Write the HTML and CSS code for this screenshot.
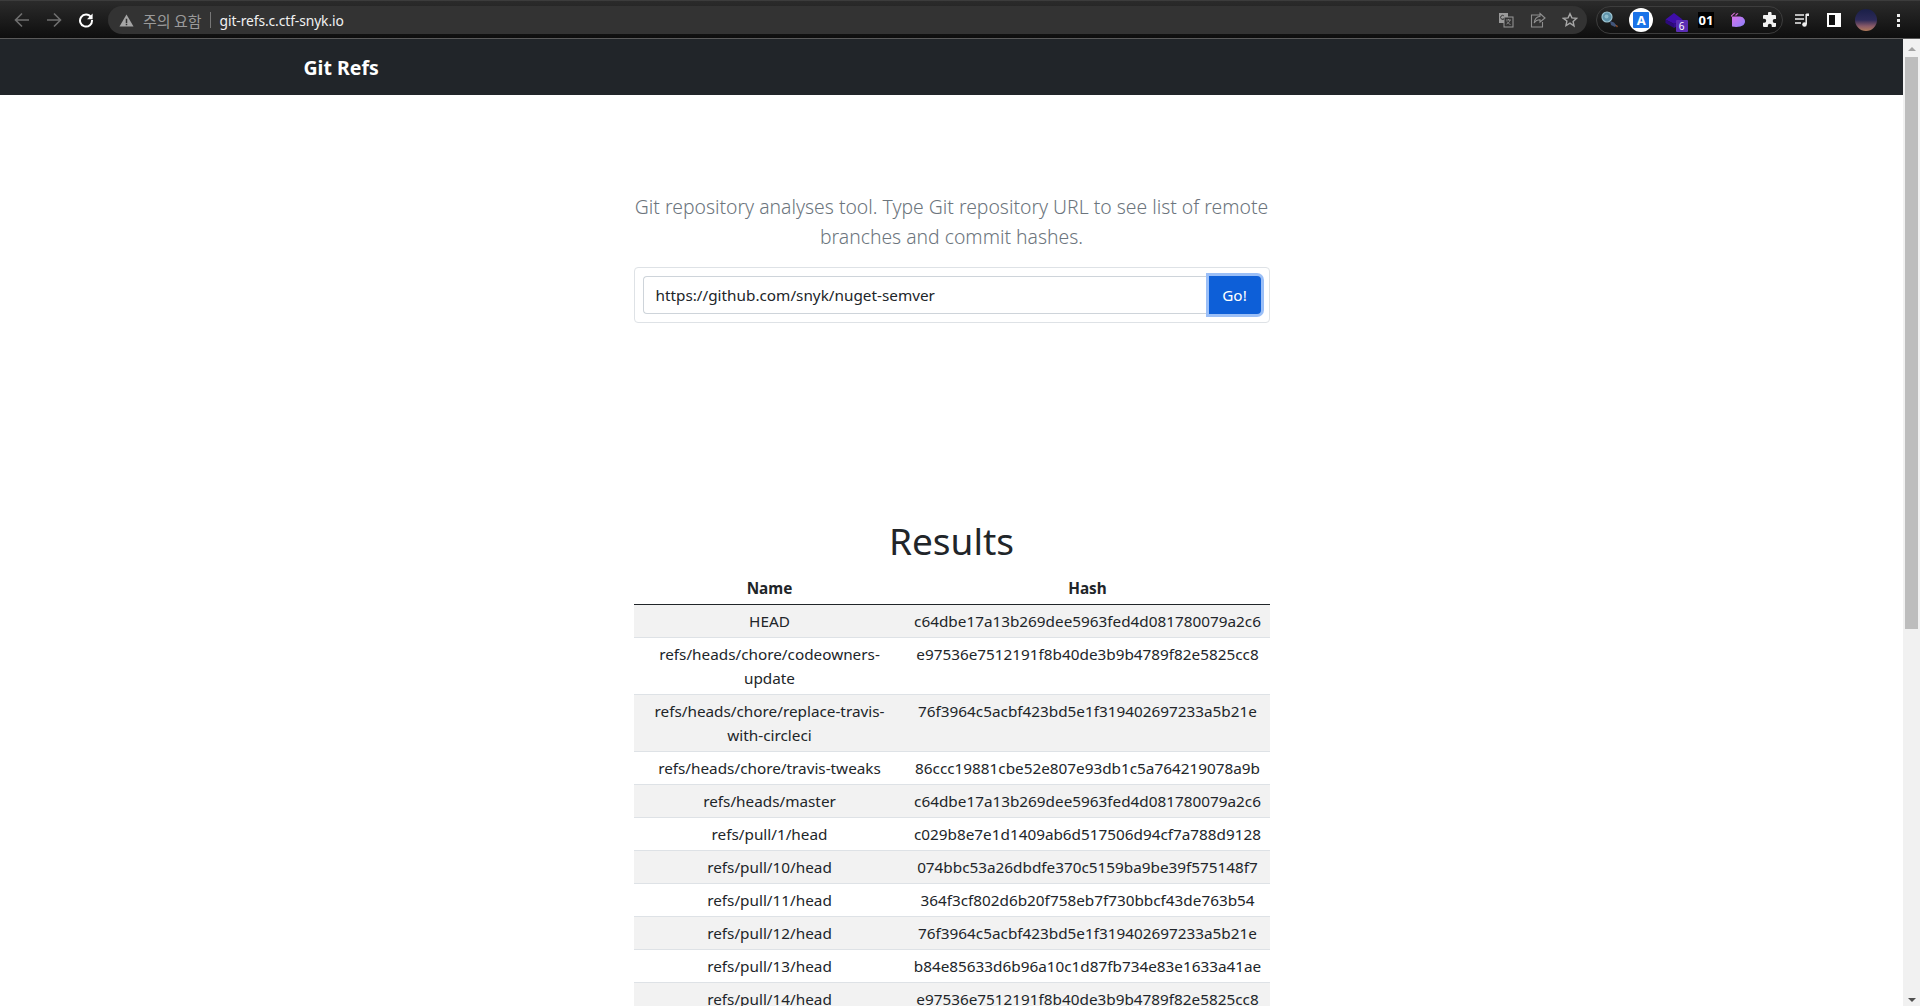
FILE: index.html
```html
<!DOCTYPE html>
<html lang="en">
<head>
<meta charset="utf-8">
<title>Git Refs</title>
<link rel="stylesheet" href="styles.css">
</head>
<body>
<header class="chrome">
  <nav class="nav-btns">
    <svg class="ic" viewBox="0 0 16 16"><path d="M15 8H1.500M8 1.500 1.500 8 8 14.500" fill="none" stroke="#6f6f6f" stroke-width="1.600"/></svg>
    <svg class="ic" viewBox="0 0 16 16"><path d="M1 8h13.500M8 1.500 14.500 8 8 14.500" fill="none" stroke="#6f6f6f" stroke-width="1.600"/></svg>
    <svg class="ic" viewBox="0 0 16 16"><path d="M13 5.200A6 6 0 1 0 14 8" fill="none" stroke="#fff" stroke-width="2"/><path d="M14.600 1.600v5.600H9z" fill="#fff"/></svg>
  </nav>
  <div class="omnibox">
    <svg class="warn" viewBox="0 0 16 16"><path d="M8 1.500 15.500 14.500H.5z" fill="#a6a6a6"/><path d="M7.200 6h1.600v4.600H7.200zM7.200 11.400h1.600V13H7.200z" fill="#333"/></svg>
    <span class="warn-text">주의 요함</span>
    <span class="sep"></span>
    <span class="url">git-refs.c.ctf-snyk.io</span>
    <span class="omni-spacer"></span>
    <svg class="ic omni-ic" viewBox="0 0 16 16"><rect x="1" y="1" width="9" height="10" fill="#9a9a9a"/><rect x="6" y="5" width="9" height="10" fill="#333" stroke="#9a9a9a"/><path d="M8 8h5M10.500 7v1M12 8c-.5 2-2 3.500-3.500 4M9 9.500c1 1.500 2 2.500 3.500 3" stroke="#9a9a9a" fill="none" stroke-width=".8"/><path d="M5.800 3.800A2 2 0 1 0 5.800 7H4.500" fill="none" stroke="#333" stroke-width="1"/></svg>
    <svg class="ic omni-ic" viewBox="0 0 16 16"><path d="M10 3H1.500v12h11V10" fill="none" stroke="#8f8f8f" stroke-width="1.100"/><path d="M10 1.500 15 6 10 10V7.800C7.500 7.800 5.500 8.800 4.200 11 4.500 7.500 6.800 4.800 10 4.300z" fill="none" stroke="#8f8f8f" stroke-width="1.100"/></svg>
    <svg class="ic omni-ic" viewBox="0 0 16 16"><path d="m8 1.700 1.900 4.200 4.600.5-3.400 3.100.9 4.500L8 11.200l-4 2.300.9-4.500L1.500 6.400l4.600-.5z" fill="none" stroke="#a8a8a8" stroke-width="1.400"/></svg>
  </div>
  <div class="ext-pill">
    <span class="slot"><svg class="ext" viewBox="0 0 20 20"><circle cx="8" cy="7" r="5" fill="#5f93aa" stroke="#9cc4d2" stroke-width="1.200"/><circle cx="7.500" cy="6.500" r="2" fill="#8fbccc"/><path d="m11 11 4 1.500 2.500 3-1.500 1.500-4-2z" fill="#41557a"/><path d="M16 14.500 19 16l-1 1.500z" fill="#a0572e"/></svg></span>
    <span class="slot"><span class="ext-a"><span class="ext-a-in">A</span></span></span>
    <span class="slot ext-box">
      <svg class="ext" viewBox="0 0 20 20"><path d="M10 3 18.500 9.500 10 14 1.500 9.500z" fill="#3e0ea8"/><path d="M1.500 9.500v3.500l8.500 5v-4z" fill="#2c0a7c"/><path d="M18.500 9.500V13L10 18v-4z" fill="#340c90"/></svg>
      <span class="badge">6</span>
    </span>
    <span class="slot"><span class="ext-01">01</span></span>
    <span class="slot"><svg class="ext-pie" viewBox="0 0 16 16"><defs><linearGradient id="pg" x1="0" y1="0" x2="1" y2="1"><stop offset="0" stop-color="#d872ea"/><stop offset="1" stop-color="#8a82fb"/></linearGradient></defs><path d="M2 4.500h7.500a5 5 0 0 1 4 8.500c-2.500 2-7.500 2.300-11.500 1.500z" fill="url(#pg)"/><path d="M1 3.500 4 .8h1.500L1 5zM4.500 3.500 7 1.200h1.500L6.500 3.500z" fill="#d76bd6"/></svg></span>
    <span class="slot"><svg class="ic" viewBox="0 0 16 16"><path d="M6 1.500a1.800 1.800 0 0 1 3.600 0V3H13a1 1 0 0 1 1 1v3h-1.300a2 2 0 0 0 0 4H14v3a1 1 0 0 1-1 1H9.800v-1.300a2 2 0 0 0-4 0V15H2a1 1 0 0 1-1-1v-3.200h1.200a2 2 0 0 0 0-4H1V4a1 1 0 0 1 1-1h4z" fill="#f2f2f2"/></svg></span>
  </div>
  <svg class="ic tool" viewBox="0 0 16 16"><path d="M1 3h9M1 7h9M1 11h6" stroke="#f0f0f0" stroke-width="1.500"/><path d="M12.200 2v10" stroke="#f0f0f0" stroke-width="1.500"/><path d="M12.200 1.500H15V4h-2.800z" fill="#f0f0f0"/><circle cx="10.500" cy="12.500" r="2.300" fill="#f0f0f0"/></svg>
  <span class="side-ic"><span class="side-ic-in"></span></span>
  <span class="avatar"></span>
  <span class="kebab"><i></i><i></i><i></i></span>
</header>
<div class="viewport">
  <div class="page">
    <div class="navbar"><div class="brand-wrap"><span class="brand">Git Refs</span></div></div>
    <main class="content">
      <p class="lead">Git repository analyses tool. Type Git repository URL to see list of remote branches and commit hashes.</p>
      <form class="search-card">
        <input class="search-input" type="text" value="https://github.com/snyk/nuget-semver">
        <button class="go" type="button">Go!</button>
      </form>
      <h2 class="results">Results</h2>
      <table class="refs">
        <thead><tr><th>Name</th><th>Hash</th></tr></thead>
        <tbody>
          <tr><td>HEAD</td><td>c64dbe17a13b269dee5963fed4d081780079a2c6</td></tr>
          <tr><td>refs/heads/chore/codeowners-update</td><td>e97536e7512191f8b40de3b9b4789f82e5825cc8</td></tr>
          <tr><td>refs/heads/chore/replace-travis-with-circleci</td><td>76f3964c5acbf423bd5e1f319402697233a5b21e</td></tr>
          <tr><td>refs/heads/chore/travis-tweaks</td><td>86ccc19881cbe52e807e93db1c5a764219078a9b</td></tr>
          <tr><td>refs/heads/master</td><td>c64dbe17a13b269dee5963fed4d081780079a2c6</td></tr>
          <tr><td>refs/pull/1/head</td><td>c029b8e7e1d1409ab6d517506d94cf7a788d9128</td></tr>
          <tr><td>refs/pull/10/head</td><td>074bbc53a26dbdfe370c5159ba9be39f575148f7</td></tr>
          <tr><td>refs/pull/11/head</td><td>364f3cf802d6b20f758eb7f730bbcf43de763b54</td></tr>
          <tr><td>refs/pull/12/head</td><td>76f3964c5acbf423bd5e1f319402697233a5b21e</td></tr>
          <tr><td>refs/pull/13/head</td><td>b84e85633d6b96a10c1d87fb734e83e1633a41ae</td></tr>
          <tr><td>refs/pull/14/head</td><td>e97536e7512191f8b40de3b9b4789f82e5825cc8</td></tr>
        </tbody>
      </table>
    </main>
  </div>
  <div class="scrollbar">
    <span class="arrow-up"></span>
    <span class="thumb"></span>
    <span class="track"></span>
    <span class="arrow-down"></span>
  </div>
</div>
</body>
</html>
```

FILE: styles.css
```css
* { box-sizing: border-box; }
html, body { margin: 0; height: 1006px; overflow: hidden; background: #fff; }
body { font-family: "Noto Sans", "Noto Sans CJK KR", sans-serif; color: #212529; display: flex; flex-direction: column; }

.chrome { height: 39px; flex: none; display: flex; align-items: center; padding: 1px 0 0 0; background: linear-gradient(#2b2b2b, #0e0e0e); border-top: 1px solid #3c3c3c; border-bottom: 1px solid #5a5a5a; }
.nav-btns { display: flex; gap: 16px; width: 108px; padding-left: 14px; flex: none; }
.ic { width: 16px; height: 16px; flex: none; }
.omnibox { width: 1479px; height: 28px; flex: none; background: #333; border-radius: 14px; display: flex; align-items: center; padding-left: 11px; }
.warn { width: 15px; height: 15px; flex: none; }
.warn-text { color: #9a9a9a; font-family: "Noto Sans CJK KR", sans-serif; font-size: 15px; margin-left: 9px; white-space: nowrap; }
.sep { width: 1px; height: 16px; background: #777; margin: 0 9px 0 8px; flex: none; }
.url { color: #f1f1f1; font-size: 13.85px; letter-spacing: -.1px; }
.omni-spacer { flex: 1; }
.omni-ic { margin-right: 16px; }
.omni-ic:last-child { margin-right: 9px; }
.ext-pill { margin-left: 9px; width: 187px; height: 28px; flex: none; border: 1px solid #3d3d3d; border-radius: 14px; display: flex; align-items: center; gap: 8.3px; }
.slot { width: 24px; height: 24px; flex: none; display: flex; align-items: center; justify-content: center; }
.ext { width: 20px; height: 20px; flex: none; }
.ext-pie { width: 16px; height: 16px; flex: none; }
.ext-a { width: 24px; height: 24px; border-radius: 50%; background: #fff; display: flex; align-items: center; justify-content: center; flex: none; }
.ext-a-in { width: 16px; height: 16px; background: #1a73e8; color: #fff; font-size: 13px; font-weight: 700; line-height: 16px; text-align: center; border-radius: 1px; }
.ext-box { position: relative; }
.badge { position: absolute; left: 14px; top: 12px; width: 12px; height: 12px; background: #5b2db5; color: #fff; font-size: 10px; line-height: 12px; text-align: center; border-radius: 1px; }
.ext-01 { width: 16px; height: 16px; background: #000; color: #fff; font-size: 13px; font-weight: 700; line-height: 16px; text-align: center; flex: none; }
.tool { margin-left: 11px; }
.side-ic { margin-left: 17px; width: 14px; height: 14px; background: #fff; flex: none; display: flex; justify-content: flex-start; padding: 2px 0 2px 2px; }
.side-ic-in { width: 6px; height: 10px; background: #111; }
.avatar { margin-left: 14px; width: 22px; height: 22px; border-radius: 50%; flex: none; background: linear-gradient(#1a1f48 0%, #2c2a58 50%, #8a5a68 78%, #b07a5a 100%); }
.kebab { margin-left: 20px; display: flex; flex-direction: column; gap: 2px; flex: none; }
.kebab i { width: 3px; height: 3px; background: #eee; display: block; }

.viewport { flex: 1; display: flex; min-height: 0; }
.page { flex: 1; min-width: 0; overflow: hidden; }
.navbar { height: 56px; background: #212529; display: flex; align-items: center; }
.brand-wrap { width: 1320px; margin: 0 auto; padding: 0 12px; }
.brand { color: #fff; font-size: 19.5px; font-weight: 700; }
.content { width: 636px; margin: 0 auto; }
.lead { margin: 97px -4px 0; font-size: 19.35px; font-weight: 300; line-height: 30px; color: #6c757d; text-align: center; }
.search-card { margin-top: 15px; height: 56px; border: 1px solid #dee2e6; border-radius: 4px; padding: 8px; display: flex; background: #fff; }
.search-input { flex: 1; min-width: 0; height: 38px; border: 1px solid #ced4da; border-right: 0; border-radius: 4px 0 0 4px; padding: 6px 12px; font: inherit; font-size: 15.3px; color: #212529; }
.go { width: 52px; height: 38px; border: 0; border-radius: 0 4px 4px 0; background: #0d5fd8; color: #fff; font: inherit; font-size: 15.3px; box-shadow: 0 0 0 3px #9bbff7; position: relative; }
.results { margin: 194px 0 0; font-size: 37px; font-weight: 400; line-height: 48px; text-align: center; }
.refs { width: 100%; margin-top: 7px; border-collapse: collapse; font-size: 15.3px; line-height: 24px; text-align: center; table-layout: fixed; }
.refs th:first-child, .refs td:first-child { width: 272px; }
.refs th { padding: 4px; font-weight: 700; border-bottom: 1px solid #212529; }
.refs td { padding: 4px; border-bottom: 1px solid #dee2e6; vertical-align: top; }
.refs tbody tr:nth-child(odd) { background: #f2f2f2; }

.scrollbar { width: 17px; flex: none; background: #f1f1f1; display: flex; flex-direction: column; align-items: center; }
.arrow-up { margin-top: 8px; border: 4px solid transparent; border-top: 0; border-bottom: 4px solid #a3a3a3; flex: none; }
.thumb { margin-top: 6px; width: 13px; height: 572px; background: #bdbdbd; flex: none; }
.track { flex: 1; }
.arrow-down { margin-bottom: 4px; border: 4px solid transparent; border-bottom: 0; border-top: 4px solid #505050; flex: none; }
```
